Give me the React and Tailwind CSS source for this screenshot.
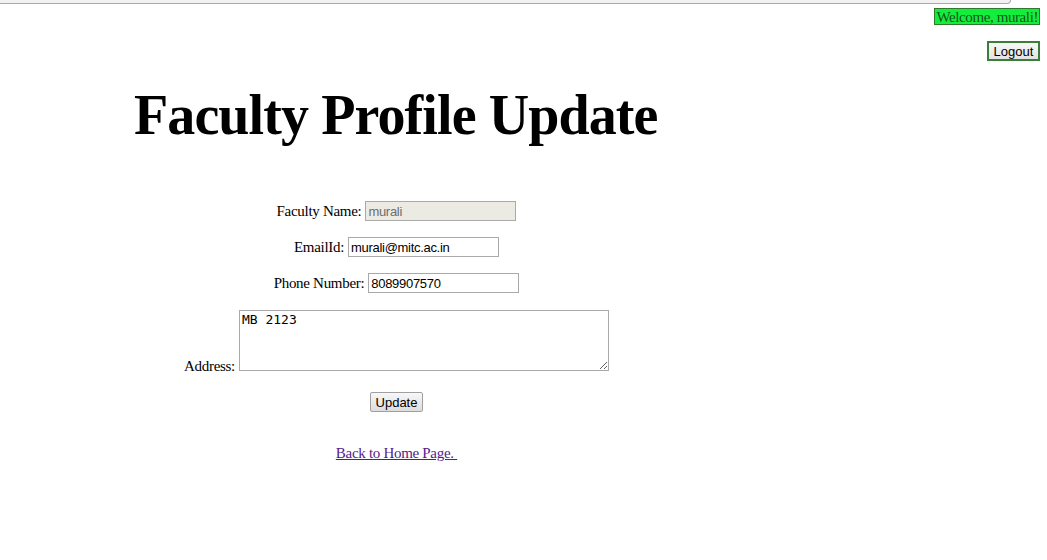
import React, { useState } from 'react';

const serif = { fontFamily: '"Liberation Serif", "Times New Roman", serif' };

const App = () => {
    const [email, setEmail] = useState('murali@mitc.ac.in');
    const [phone, setPhone] = useState('8089907570');
    const [address, setAddress] = useState('MB 2123');

    const inputCls = "h-[20px] w-[151px] border border-[#a9a9a9] px-[2px] text-[13px] text-black bg-white font-['Liberation_Sans',Arial,sans-serif] outline-none";

    return (
        <div className="min-h-screen bg-white text-black" style={serif}>
            {/* top strip */}
            <div className="h-[4px] w-[1011px] bg-[#f2f2f2] border-b border-r border-[#a8a8a8] rounded-br-[4px]" />

            {/* welcome + logout */}
            <div className="flex flex-col items-end pr-[7px]">
                <span className="mt-[4px] h-[17px] leading-[16px] px-[1px] bg-[#13ee3c] border border-[#2d7a2d] text-[15px] tracking-[-0.4px] text-[#14561a]">
                    Welcome, murali!
                </span>
                <button className="mt-[16px] h-[20px] w-[53px] border-2 border-[#3b7d3b] bg-gradient-to-b from-[#f8f8f8] to-[#e2e2e2] text-[13px] leading-none font-['Liberation_Sans',Arial,sans-serif]">
                    Logout
                </button>
            </div>

            <h1 className="mt-[26px] pl-[134px] text-[56px] font-bold leading-none tracking-[-0.9px]">Faculty Profile Update</h1>

            {/* form */}
            <form className="mt-[58px] w-[793px] flex flex-col items-center text-[15px] tracking-[-0.3px]" onSubmit={(e) => e.preventDefault()}>
                <div className="flex items-center gap-[4px] h-[20px]">
                    <span>Faculty Name:</span>
                    <input value="murali" readOnly className={inputCls + " !bg-[#ebebe4] !text-[#6d6d6d]"} />
                </div>
                <div className="mt-[16px] flex items-center gap-[4px] h-[20px]">
                    <span>EmailId:</span>
                    <input value={email} onChange={(e) => setEmail(e.target.value)} className={inputCls} />
                </div>
                <div className="mt-[16px] flex items-center gap-[4px] h-[20px]">
                    <span>Phone Number:</span>
                    <input value={phone} onChange={(e) => setPhone(e.target.value)} className={inputCls} />
                </div>
                <div className="mt-[17px] flex items-end gap-[4px]">
                    <span className="leading-none mb-[-3px]">Address:</span>
                    <textarea value={address} onChange={(e) => setAddress(e.target.value)}
                        className="h-[61px] w-[370px] border border-[#a9a9a9] px-[2px] py-[1px] text-[13px] tracking-normal leading-[15px] font-['DejaVu_Sans_Mono',monospace] outline-none" />
                </div>
                <button type="submit" className="mt-[21px] h-[20px] w-[53px] border border-[#a0a0a0] rounded-[2px] bg-gradient-to-b from-[#f8f8f8] to-[#dddddd] text-[13px] tracking-normal leading-none font-['Liberation_Sans',Arial,sans-serif]">
                    Update
                </button>
                <a href="#" className="mt-[32px] text-[#551a8b] underline leading-[18px]">Back to Home Page.&nbsp;</a>
            </form>
        </div>
    );
};

export default App;
